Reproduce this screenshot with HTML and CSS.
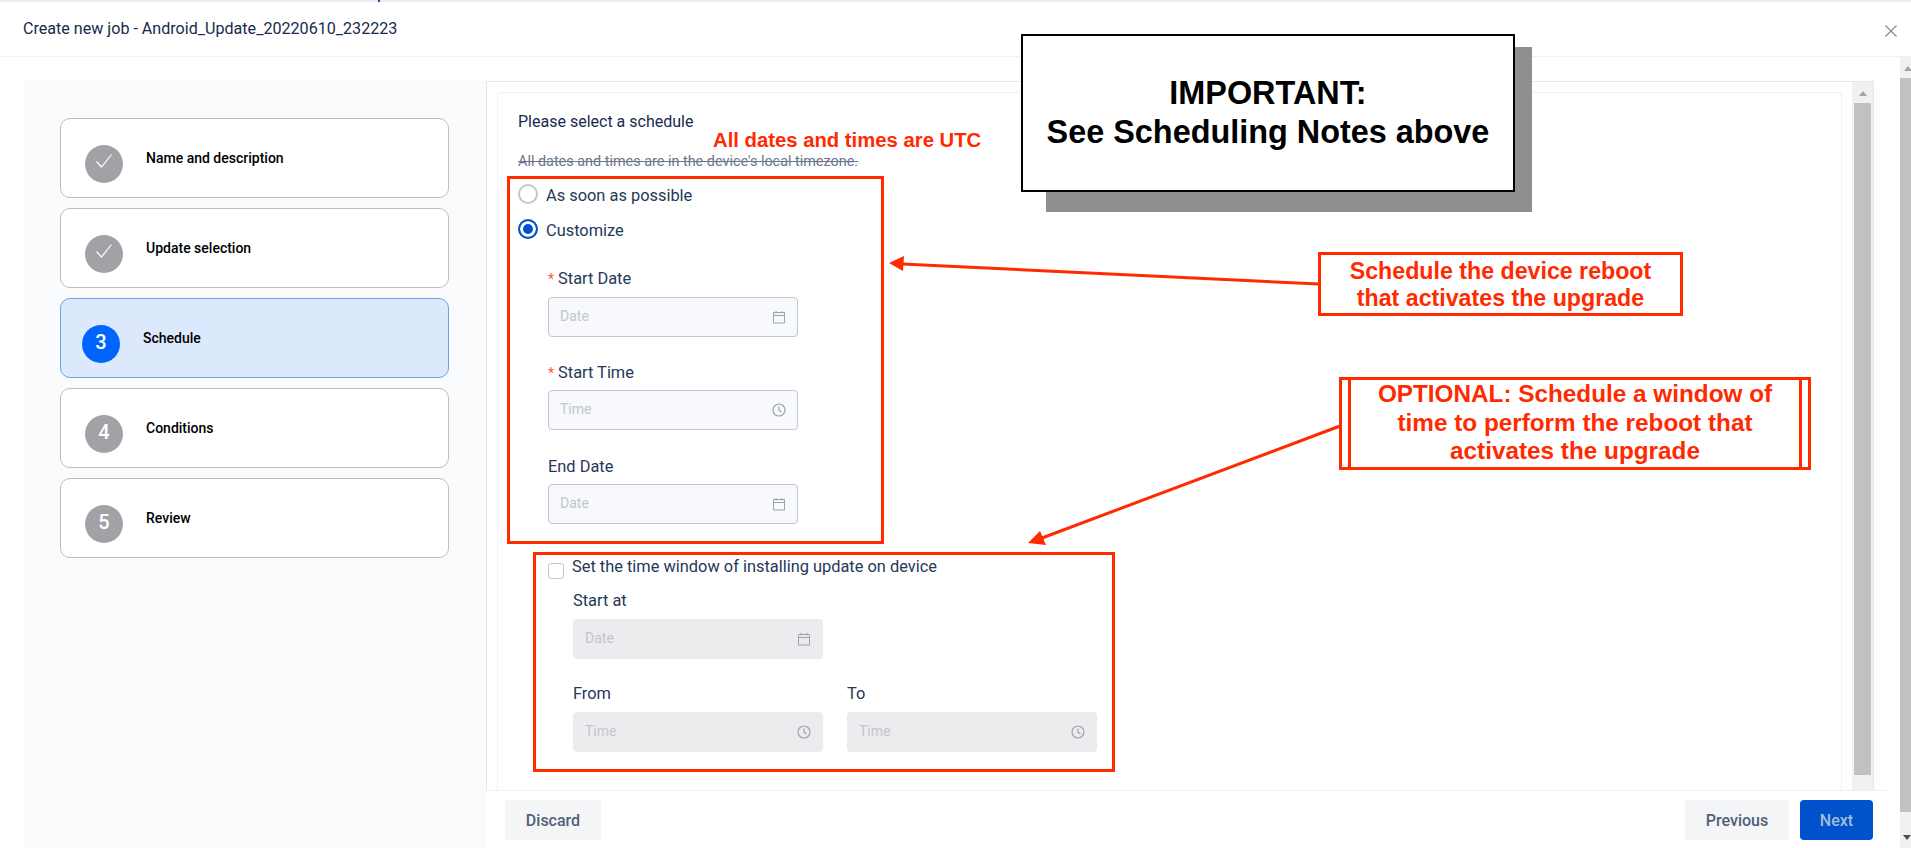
FILE: index.html
```html
<!DOCTYPE html>
<html>
<head>
    <title>Create new job</title>
    <link rel="stylesheet" href="styles.css">
</head>
<body>
    <svg class="icon-defs" width="0" height="0">
        <symbol id="cal" viewBox="0 0 14 14">
            <path d="M1.5 2.5h11v10.5h-11zM1.5 5.5h11M4 1v2.5M10 1v2.5" fill="none" stroke="currentColor" stroke-width="1"/>
        </symbol>
        <symbol id="clock" viewBox="0 0 14 14">
            <circle cx="7" cy="7" r="6" fill="none" stroke="currentColor" stroke-width="1.2"/>
            <path d="M7 3.5V7.3L9.5 9" fill="none" stroke="currentColor" stroke-width="1.2"/>
        </symbol>
        <symbol id="tick" viewBox="0 0 18 16">
            <path d="M1.5 8.5L6.5 14L16.5 1.5" fill="none" stroke="#fff" stroke-width="1.2"/>
        </symbol>
    </svg>

    <div class="page">
        <div class="top-strip"></div>
        <header class="modal-header">
            <span class="modal-title">Create new job - Android_Update_20220610_232223</span>
            <svg class="close-icon" width="12" height="12" viewBox="0 0 12 12"><path d="M.5.5l11 11M11.5.5l-11 11" stroke="#8a8a8a" stroke-width="1.2" fill="none"/></svg>
        </header>

        <div class="modal-content">
            <div class="wizard">
                <nav class="steps">
                    <div class="step"><span class="step-circle"><svg class="tick" width="18" height="16"><use href="#tick"/></svg></span><span class="step-name">Name and description</span></div>
                    <div class="step"><span class="step-circle"><svg class="tick" width="18" height="16"><use href="#tick"/></svg></span><span class="step-name">Update selection</span></div>
                    <div class="step step-active"><span class="step-circle">3</span><span class="step-name">Schedule</span></div>
                    <div class="step"><span class="step-circle">4</span><span class="step-name">Conditions</span></div>
                    <div class="step"><span class="step-circle">5</span><span class="step-name">Review</span></div>
                </nav>

                <main class="main">
                    <div class="frame">
                        <div class="card">
                            <div class="card-title">Please select a schedule</div>
                            <div class="card-note">All dates and times are in the device's local timezone.</div>

                            <label class="radio-row first"><input type="radio" name="when"><span>As soon as possible</span></label>
                            <label class="radio-row"><input type="radio" name="when" checked><span>Customize</span></label>

                            <div class="fields">
                                <div class="field first">
                                    <div class="field-label"><span class="req">*</span>Start Date</div>
                                    <div class="fake-input"><span>Date</span><svg><use href="#cal"/></svg></div>
                                </div>
                                <div class="field low-label">
                                    <div class="field-label"><span class="req">*</span>Start Time</div>
                                    <div class="fake-input"><span>Time</span><svg><use href="#clock"/></svg></div>
                                </div>
                                <div class="field low-label wide-gap">
                                    <div class="field-label">End Date</div>
                                    <div class="fake-input"><span>Date</span><svg><use href="#cal"/></svg></div>
                                </div>
                            </div>

                            <label class="check-row"><input type="checkbox"><span>Set the time window of installing update on device</span></label>

                            <div class="window">
                                <div class="field tight">
                                    <div class="field-label">Start at</div>
                                    <div class="fake-input off"><span>Date</span><svg><use href="#cal"/></svg></div>
                                </div>
                                <div class="field-pair">
                                    <div class="field">
                                        <div class="field-label">From</div>
                                        <div class="fake-input off"><span>Time</span><svg><use href="#clock"/></svg></div>
                                    </div>
                                    <div class="field">
                                        <div class="field-label">To</div>
                                        <div class="fake-input off"><span>Time</span><svg><use href="#clock"/></svg></div>
                                    </div>
                                </div>
                            </div>
                        </div>
                        <div class="scrollbar inner-bar"><i class="arrow-up"></i><b class="thumb"></b></div>
                    </div>

                    <footer class="modal-footer">
                        <button class="btn btn-discard">Discard</button>
                        <button class="btn btn-prev">Previous</button>
                        <button class="btn btn-next">Next</button>
                    </footer>
                </main>
            </div>
            <div class="scrollbar page-bar"><i class="arrow-up"></i><b class="thumb"></b><i class="arrow-down"></i></div>
        </div>
    </div>

    <!-- annotations pasted on top of the screenshot -->
    <div class="annotations">
        <svg class="arrows" width="1911" height="848" viewBox="0 0 1911 848">
            <path d="M1319 284L902 264" stroke="#ff2a00" stroke-width="3" fill="none"/>
            <path d="M889 263L904 256L903 271Z" fill="#ff2a00"/>
            <path d="M1340 426L1042 538" stroke="#ff2a00" stroke-width="3" fill="none"/>
            <path d="M1028 543L1040 531L1046 545Z" fill="#ff2a00"/>
        </svg>
        <div class="red-box box-main"></div>
        <div class="red-box box-window"></div>
        <div class="utc-note">All dates and times are UTC</div>
        <div class="important-shadow"></div>
        <div class="important">IMPORTANT:<br>See Scheduling Notes above</div>
        <div class="callout callout-reboot">Schedule the device reboot<br>that activates the upgrade</div>
        <div class="callout callout-optional"><div>OPTIONAL: Schedule a window of<br>time to perform the reboot that<br>activates the upgrade</div></div>
    </div>
</body>
</html>
```

FILE: styles.css
```css
html, body {
    margin: 0;
    padding: 0;
}
body {
    background-color: #fff;
    color: #253858;
    font-family: Roboto, "Noto Sans", sans-serif;
    font-size: 16px;
    overflow: hidden;
}
.icon-defs {
    display: block;
    height: 0;
}
.page {
    width: 1911px;
    height: 848px;
    display: flex;
    flex-direction: column;
    overflow: hidden;
}
.top-strip {
    height: 2px;
    background: linear-gradient(90deg, transparent 378px, #0052cc 378px, #0052cc 380px, transparent 380px), #ececec;
}
.modal-header {
    height: 54px;
    flex: none;
    display: flex;
    align-items: center;
    justify-content: space-between;
    padding: 0 14px 0 23px;
    border-bottom: 1px solid #eff1f6;
}
.modal-title {
    padding-bottom: 1px;
    font-size: 16.1px;
    color: #172b4d;
}
.close-icon {
    margin-top: 4px;
}
.modal-content {
    flex: 1;
    display: flex;
    min-height: 0;
}
.wizard {
    flex: 1;
    display: flex;
    min-width: 0;
    padding: 24px 10px 0 23px;
}

/* left steps */
.steps {
    width: 463px;
    flex: none;
    box-sizing: border-box;
    padding: 37px 37px 0;
    background-color: #fafbfd;
    display: flex;
    flex-direction: column;
    gap: 10px;
}
.step {
    height: 80px;
    box-sizing: border-box;
    display: flex;
    align-items: center;
    gap: 23px;
    padding-left: 24px;
    border: 1px solid #bdbdbd;
    border-radius: 10px;
    background-color: #fff;
}
.step-circle {
    width: 38px;
    height: 38px;
    box-sizing: border-box;
    flex: none;
    margin-top: 12px;
    padding-bottom: 4px;
    border-radius: 50%;
    background-color: #a1a2a6;
    color: #fff;
    font-size: 20px;
    font-weight: 500;
    display: flex;
    align-items: center;
    justify-content: center;
}
.tick {
    margin-bottom: 2px;
}
.step-name {
    font-size: 14px;
    font-weight: 500;
    color: #000;
}
.step-active {
    padding-left: 21px;
    background-color: #dce9fd;
    border-color: #6f9fe6;
}
.step-active .step-circle {
    background-color: #0065ff;
}

/* right side */
.main {
    flex: 1;
    min-width: 0;
    display: flex;
    flex-direction: column;
}
.frame {
    flex: 1;
    min-height: 0;
    box-sizing: border-box;
    margin-right: 16px;
    padding-left: 10px;
    border: 1px solid #e6e6e6;
    border-bottom: none;
    display: flex;
    overflow: hidden;
}
.card {
    flex: 1;
    box-sizing: border-box;
    height: 760px;
    margin: 10px 10px 0 0;
    padding: 18px 20px 0;
    border: 1px solid #eff1f6;
    border-radius: 3px;
}
.card-title {
    line-height: 22px;
    font-size: 16px;
    color: #172b4d;
}
.card-note {
    margin-top: 18px;
    line-height: 22px;
    font-size: 14.4px;
    color: #6b778c;
    text-decoration: line-through;
}
.radio-row {
    display: flex;
    align-items: center;
    gap: 8px;
    height: 20px;
    margin-top: 15px;
    font-size: 16.4px;
}
.radio-row span {
    padding-top: 2px;
}
.radio-row.first {
    margin-top: 11px;
}
.radio-row input {
    appearance: none;
    width: 20px;
    height: 20px;
    margin: 0;
    box-sizing: border-box;
    border: 2px solid #c1c7d0;
    border-radius: 50%;
    background-color: #fff;
}
.radio-row input:checked {
    border: 2px solid #0052cc;
    background-color: #0052cc;
    box-shadow: inset 0 0 0 3px #fff;
}
.fields {
    padding-left: 30px;
}
.field {
    margin-top: 24px;
}
.field.first {
    margin-top: 29px;
}
.field.low-label {
    margin-top: 25px;
}
.field.low-label .field-label {
    margin-bottom: 6px;
}
.field.wide-gap {
    margin-top: 26px;
}
.field.tight {
    margin-top: 11px;
}
.field-label {
    line-height: 22px;
    margin-bottom: 7px;
    font-size: 16.4px;
}
.req {
    color: #ff5630;
    font-size: 14px;
    margin-right: 4px;
}
.fake-input {
    width: 250px;
    height: 40px;
    box-sizing: border-box;
    display: flex;
    align-items: center;
    justify-content: space-between;
    padding: 0 11px 0 11px;
    border: 1px solid #c1c7d0;
    border-radius: 4px;
    background-color: #f8f9fc;
    color: #c1c7d0;
    font-size: 14px;
}
.fake-input span {
    padding-bottom: 2px;
}
.fake-input svg {
    width: 14px;
    height: 14px;
    color: #9aa3b0;
}
.fake-input.off {
    background-color: #ececee;
    border-color: #ececee;
}
.check-row {
    display: flex;
    gap: 8px;
    margin: 32px 0 0 30px;
    line-height: 22px;
    font-size: 16.4px;
}
.check-row input {
    appearance: none;
    width: 16px;
    height: 16px;
    flex: none;
    margin: 7px 0 0;
    box-sizing: border-box;
    border: 1px solid #c1c7d0;
    border-radius: 3px;
    background-color: #fff;
}
.window {
    padding-left: 55px;
}
.field-pair {
    display: flex;
    gap: 24px;
}

/* scrollbars */
.scrollbar {
    flex: none;
    background-color: #f1f1f1;
    display: flex;
    flex-direction: column;
    align-items: center;
}
.thumb {
    display: block;
    background-color: #c1c1c1;
}
.arrow-up, .arrow-down {
    display: block;
    width: 0;
    height: 0;
    border-left: 4.5px solid transparent;
    border-right: 4.5px solid transparent;
}
.arrow-up {
    border-bottom: 5px solid #a3a3a3;
}
.arrow-down {
    border-top: 5px solid #505050;
}
.inner-bar {
    width: 21px;
}
.inner-bar .arrow-up {
    margin-top: 9px;
}
.inner-bar .thumb {
    width: 17px;
    height: 672px;
    margin-top: 7px;
}
.page-bar {
    width: 11px;
    align-items: flex-start;
}
.page-bar .thumb {
    width: 11px;
    height: 734px;
    margin-top: 7px;
}
.page-bar .arrow-up {
    margin: 9px 0 0 4px;
}
.page-bar .arrow-down {
    margin: 23px 0 0 3px;
}

/* footer */
.modal-footer {
    height: 58px;
    flex: none;
    box-sizing: border-box;
    display: flex;
    align-items: flex-start;
    gap: 11px;
    padding: 9px 17px 0 19px;
    border-top: 1px solid #eff1f6;
}
.btn {
    height: 40px;
    border: none;
    border-radius: 4px;
    font-family: Roboto, sans-serif;
    font-size: 16px;
    font-weight: 500;
    background-color: #f4f5f7;
    color: #505f79;
}
.btn-discard {
    width: 96px;
    margin-right: auto;
}
.btn-prev {
    width: 104px;
}
.btn-next {
    width: 73px;
    background-color: #0052cc;
    color: #a5bbdc;
}

/* annotations */
.annotations {
    position: absolute;
    inset: 0;
    width: 1911px;
    height: 848px;
    pointer-events: none;
    font-family: "Liberation Sans", Arial, sans-serif;
    font-weight: bold;
}
.arrows {
    position: absolute;
    left: 0;
    top: 0;
}
.red-box {
    position: absolute;
    box-sizing: border-box;
    border: 3px solid #ff2a00;
}
.box-main {
    left: 507px;
    top: 176px;
    width: 377px;
    height: 368px;
}
.box-window {
    left: 533px;
    top: 552px;
    width: 582px;
    height: 220px;
}
.utc-note {
    position: absolute;
    left: 713px;
    top: 128px;
    font-size: 20.3px;
    line-height: 24px;
    color: #ff2a00;
}
.important-shadow {
    position: absolute;
    left: 1046px;
    top: 47px;
    width: 486px;
    height: 165px;
    background-color: #8f8f8f;
}
.important {
    position: absolute;
    left: 1021px;
    top: 34px;
    width: 494px;
    height: 158px;
    box-sizing: border-box;
    padding-top: 38px;
    border: 2px solid #000;
    background-color: #fff;
    font-size: 32.4px;
    line-height: 39px;
    text-align: center;
    color: #000;
}
.callout {
    position: absolute;
    box-sizing: border-box;
    background-color: #fff;
    border: 3px solid #ff2a00;
    color: #ff2a00;
    text-align: center;
}
.callout-reboot {
    left: 1318px;
    top: 252px;
    width: 365px;
    height: 64px;
    padding-top: 3px;
    font-size: 23.2px;
    line-height: 27px;
}
.callout-optional {
    left: 1339px;
    top: 377px;
    width: 472px;
    height: 93px;
    padding: 0 6px;
    font-size: 24.3px;
    line-height: 28.5px;
}
.callout-optional div {
    height: 100%;
    border-left: 3px solid #ff2a00;
    border-right: 3px solid #ff2a00;
}
```
